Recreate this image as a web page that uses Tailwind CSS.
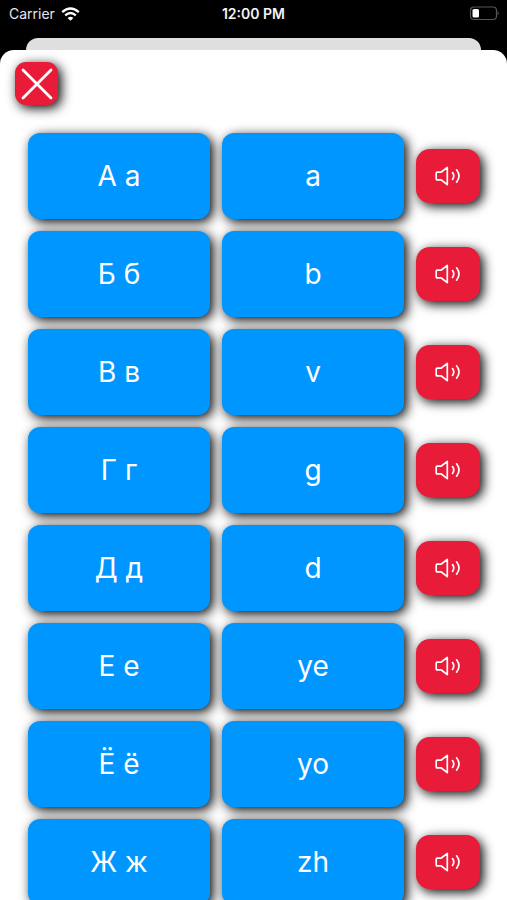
<!DOCTYPE html>
<html lang="en">
<head>
<meta charset="utf-8">
<meta name="viewport" content="width=device-width, initial-scale=1">
<title>Alphabet</title>
<script src="https://cdn.jsdelivr.net/npm/@tailwindcss/browser@4"></script>
</head>
<body class="flex h-screen flex-col overflow-hidden bg-black font-['Inter','Noto_Sans',sans-serif]">
<svg class="hidden" aria-hidden="true">
  <symbol id="speaker" viewBox="0 0 26 20">
    <g fill="none" stroke="currentColor" stroke-width="1.7" stroke-linecap="round" stroke-linejoin="round">
      <path d="M1.2 7.2Q1.2 6.2 2.2 6.2H6L12.3 1.4V18.6L6 13.8H2.2Q1.2 13.8 1.2 12.8Z"/>
      <path d="M17.5 6.6Q20.1 10 17.5 13.4"/>
      <path d="M21.6 3.8Q26.4 10 21.6 16.2"/>
    </g>
  </symbol>
</svg>

<header class="grid h-[38px] shrink-0 grid-cols-3 items-start px-2 pt-1 text-[14px] leading-5 text-white">
  <div class="flex items-center gap-1.5 pl-px text-gray-200">
    <span>Carrier</span>
    <svg class="h-[14px] w-[19px] text-white" viewBox="0 0 19 14" fill="none" stroke="currentColor" stroke-width="2.3" aria-label="Wi-Fi">
      <path d="M1.2 5.2Q9.5-2.2 17.8 5.2"/>
      <path d="M4.2 8.4Q9.5 3.6 14.8 8.4"/>
      <path d="M6.6 10.9Q9.5 8.4 12.4 10.9L9.5 13.8Z" fill="currentColor" stroke="none"/>
    </svg>
  </div>
  <time class="text-center font-semibold text-gray-100">12:00 PM</time>
  <svg class="mt-0.5 h-[15px] w-[30px] justify-self-end" viewBox="0 0 30 15" aria-label="Battery">
    <rect x="1.5" y="1" width="26" height="12.5" rx="3.5" fill="none" stroke="#555" stroke-width="1.2"/>
    <path d="M28.7 5Q30.5 7.2 28.7 9.5Z" fill="#666"/>
    <rect x="3.5" y="3" width="6.5" height="8.5" rx="1.5" fill="#fff"/>
  </svg>
</header>

<div class="mx-[26px] h-3 shrink-0 rounded-t-xl bg-[#dfdfdf]"></div>

<main class="flex min-h-0 flex-1 flex-col rounded-t-[14px] bg-white">
  <div class="px-[15px] pt-3">
    <button type="button" aria-label="Close" class="flex size-[43px] items-center justify-center rounded-[11px] bg-[#e81c38] text-white shadow-[3px_3px_12px_#000]">
      <svg class="size-8" viewBox="0 0 32 32" fill="none" stroke="currentColor" stroke-width="2.8" stroke-linecap="round"><path d="M2 2L30 30M30 2L2 30"/></svg>
    </button>
  </div>
  <ul id="letters" class="flex min-h-0 flex-1 flex-col gap-3 overflow-y-auto pt-7 pr-[27px] pb-7 pl-7 [scrollbar-width:none]"></ul>
</main>

<template id="row">
  <li class="grid h-[86px] shrink-0 grid-cols-[1fr_1fr_64px] items-center gap-3 text-[28px] text-white">
    <span data-letter class="flex h-full items-center justify-center rounded-xl bg-[#0096ff] shadow-[3px_3px_12px_#000]"></span>
    <span data-sound class="flex h-full items-center justify-center rounded-xl bg-[#0096ff] shadow-[3px_3px_12px_#000]"></span>
    <button type="button" class="flex h-[54px] items-center justify-center rounded-[14px] bg-[#e81c38] shadow-[3px_3px_12px_#000]">
      <svg class="h-5 w-[26px]"><use href="#speaker"/></svg>
    </button>
  </li>
</template>
<script>
const letters = [["А а","a"],["Б б","b"],["В в","v"],["Г г","g"],["Д д","d"],["Е е","ye"],["Ё ё","yo"],["Ж ж","zh"]];
const list = document.getElementById("letters");
const row = document.getElementById("row");
for (const [letter, sound] of letters) {
  const item = row.content.cloneNode(true);
  item.querySelector("[data-letter]").textContent = letter;
  item.querySelector("[data-sound]").textContent = sound;
  item.querySelector("button").setAttribute("aria-label", "Play " + letter);
  list.append(item);
}
</script>
</body>
</html>
